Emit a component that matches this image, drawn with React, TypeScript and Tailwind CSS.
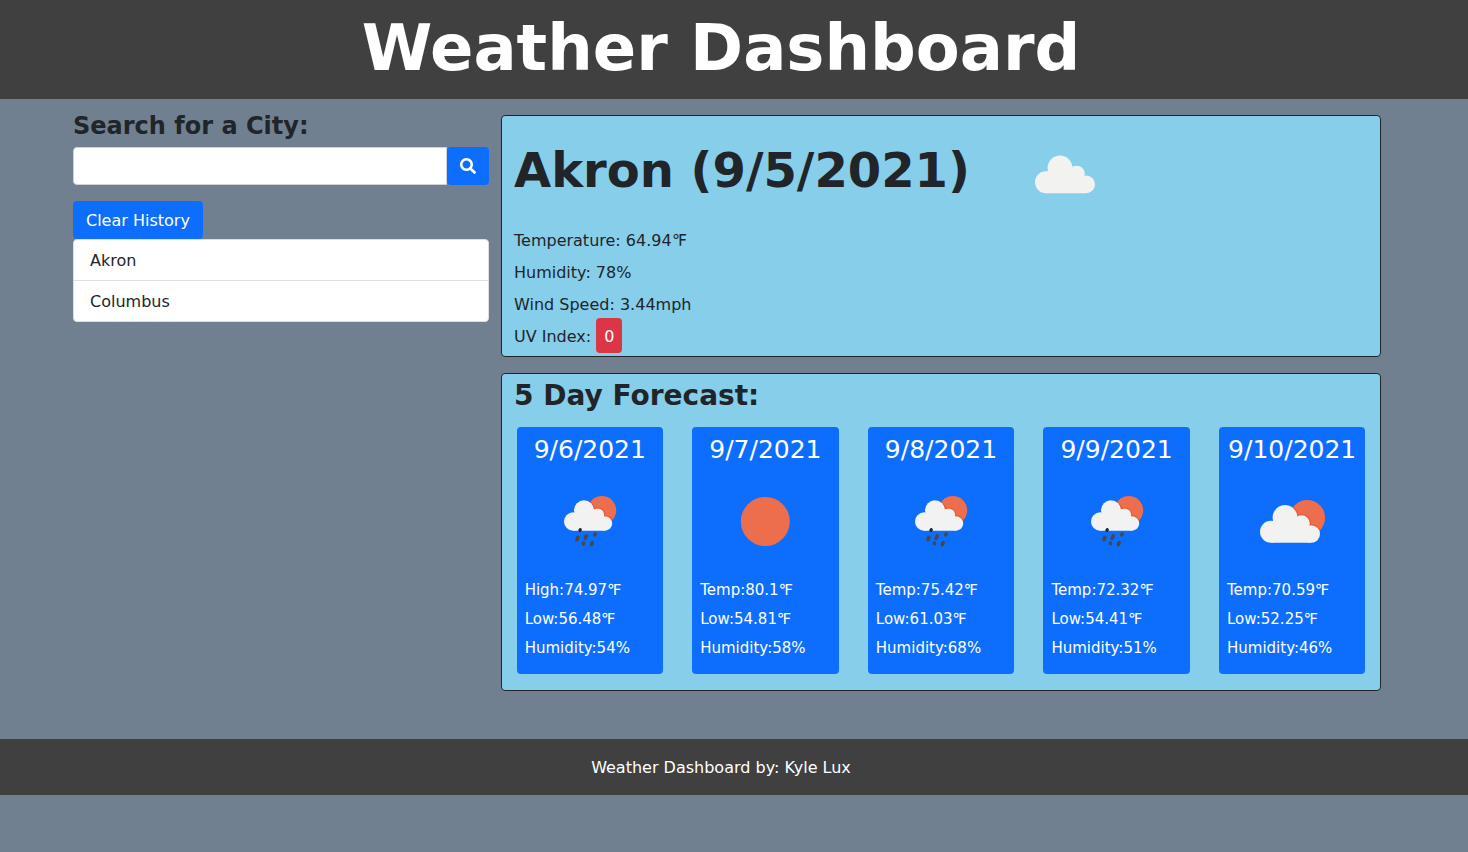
import { FormEvent, useState } from "react";
import { FaSearch } from "react-icons/fa";

type Sky = "cloud" | "rain" | "sun" | "partly";

const forecast: { date: string; sky: Sky; label: string; high: string; low: string; humidity: string }[] = [
  { date: "9/6/2021", sky: "rain", label: "High", high: "74.97", low: "56.48", humidity: "54" },
  { date: "9/7/2021", sky: "sun", label: "Temp", high: "80.1", low: "54.81", humidity: "58" },
  { date: "9/8/2021", sky: "rain", label: "Temp", high: "75.42", low: "61.03", humidity: "68" },
  { date: "9/9/2021", sky: "rain", label: "Temp", high: "72.32", low: "54.41", humidity: "51" },
  { date: "9/10/2021", sky: "partly", label: "Temp", high: "70.59", low: "52.25", humidity: "46" },
];

function LargeCloud() {
  return (
    <>
      <circle cx="29" cy="60.8" r="11" />
      <circle cx="43" cy="46.5" r="12.4" />
      <circle cx="59.6" cy="52.5" r="8.2" />
      <circle cx="69.2" cy="63" r="8.8" />
      <path d="M29 71.8V50H32L55 46L60 56L69 58V71.8Z" />
    </>
  );
}

function SmallCloud() {
  return (
    <>
      <circle cx="33.2" cy="50.5" r="9.2" />
      <circle cx="44" cy="39.2" r="10" />
      <circle cx="57.6" cy="44" r="6.6" />
      <circle cx="65" cy="52.5" r="7.2" />
      <path d="M33 59.7V42H36L54 38L58 47L65 48V59.7Z" />
    </>
  );
}

function SkyIcon({ sky }: { sky: Sky }) {
  return (
    <svg viewBox="0 0 100 100" className="size-[100px] shrink-0" aria-hidden="true">
      {sky === "sun" && <circle cx="50.3" cy="50.5" r="24.5" fill="#ec6e4c" />}
      {sky === "cloud" && (
        <g fill="#f2f2f0" transform="translate(3 1.4)">
          <LargeCloud />
        </g>
      )}
      {sky === "partly" && (
        <>
          <clipPath id="partly-sun">
            <circle cx="65.3" cy="46.8" r="17.8" />
          </clipPath>
          <circle cx="65.3" cy="46.8" r="17.8" fill="#ec6e4c" />
          <g clipPath="url(#partly-sun)" fill="#ea5430" stroke="#ea5430" strokeWidth="2">
            <LargeCloud />
          </g>
          <g fill="#f2f2f0">
            <LargeCloud />
          </g>
        </>
      )}
      {sky === "rain" && (
        <>
          <clipPath id="rain-sun">
            <circle cx="61.9" cy="39.3" r="14.3" />
          </clipPath>
          <circle cx="61.9" cy="39.3" r="14.3" fill="#ec6e4c" />
          <g clipPath="url(#rain-sun)" fill="#ea5430" stroke="#ea5430" strokeWidth="2">
            <SmallCloud />
          </g>
          <g fill="#f2f2f2">
            <SmallCloud />
          </g>
          <g stroke="#484848" strokeWidth="3.6" strokeLinecap="round">
            <path d="M40.3 58.6L39.9 59.4" stroke="#222222" strokeWidth="3.2" />
            <path d="M37.9 66.3L36.9 68.7" />
            <path d="M46.3 64.9L45.2 67.3" />
            <path d="M55.2 63L54.8 63.8" />
            <path d="M43.6 72L43.4 72.8" />
            <path d="M52.3 71.6L51.4 73.6" />
          </g>
        </>
      )}
    </svg>
  );
}

export default function App() {
  const [query, setQuery] = useState("");
  const [cities, setCities] = useState(["Akron", "Columbus"]);

  function search(event: FormEvent) {
    event.preventDefault();
    const city = query.trim();
    if (city && !cities.includes(city)) setCities([...cities, city]);
    setQuery("");
  }

  return (
    <div className="min-h-screen bg-[#708090] font-['Verdana','DejaVu_Sans',sans-serif] text-base text-[#212529]">
      <header className="bg-[#404040] pt-[10px] pr-[26px] pb-3 text-center text-white">
        <h1 className="text-[64px] leading-[77px] font-bold">Weather Dashboard</h1>
      </header>

      <main className="pt-4 pr-[26px] pb-12">
        <div className="mx-auto flex max-w-[1320px] flex-col lg:flex-row">
          <aside className="-mt-1 px-3 lg:w-1/3">
            <form onSubmit={search}>
              <label htmlFor="city" className="mb-1.5 block text-2xl leading-[30px] font-bold">
                Search for a City:
              </label>
              <div className="flex">
                <input
                  id="city"
                  type="text"
                  value={query}
                  onChange={(event) => setQuery(event.target.value)}
                  className="h-[38px] min-w-0 flex-1 rounded-l border border-[#ced4da] bg-white px-3 outline-none"
                />
                <button
                  type="submit"
                  aria-label="Search"
                  className="flex h-[38px] w-[42px] items-center justify-center rounded bg-[#0d6efd] text-white"
                >
                  <FaSearch />
                </button>
              </div>
            </form>
            <button
              type="button"
              onClick={() => setCities([])}
              className="mt-4 block rounded bg-[#0d6efd] px-[13px] pt-2 pb-1.5 text-white"
            >
              Clear History
            </button>
            <ul className="divide-y divide-[#dfdfdf] rounded border border-[#dfdfdf] bg-white">
              {cities.map((city) => (
                <li key={city} className="px-4 pt-[9px] pb-[7px]">
                  {city}
                </li>
              ))}
            </ul>
          </aside>

          <div className="flex flex-col gap-4 lg:w-2/3">
            <section className="rounded border border-[#212529] bg-[#87ceeb] px-3 pt-1 pb-[7px]">
              <div className="flex items-center gap-11">
                <h2 className="text-5xl leading-[58px] font-bold">Akron (9/5/2021)</h2>
                <SkyIcon sky="cloud" />
              </div>
              <div className="mt-[9px] flex flex-col gap-2">
                <p>Temperature: 64.94℉</p>
                <p>Humidity: 78%</p>
                <p>Wind Speed: 3.44mph</p>
                <p>
                  UV Index: <span className="rounded bg-[#dc3545] px-2 pt-[9px] pb-[7px] text-white">0</span>
                </p>
              </div>
            </section>

            <section className="rounded border border-[#212529] bg-[#87ceeb] pt-[5px] pb-4">
              <h2 className="mb-[14px] px-3 text-[28px] leading-[34px] font-bold">5 Day Forecast:</h2>
              <div className="flex justify-around">
                {forecast.map((day) => (
                  <article key={day.date} className="w-1/6 rounded bg-[#0d6efd] px-2 pt-2 pb-[11px] text-white">
                    <h3 className="flex justify-center text-[25px] leading-[30px]">{day.date}</h3>
                    <div className="mt-1.5 mb-[5px] flex justify-center">
                      <SkyIcon sky={day.sky} />
                    </div>
                    <div className="text-[15px]">
                      <p className="py-1 leading-[21px]">{day.label}:{day.high}℉</p>
                      <p className="py-1 leading-[21px]">Low:{day.low}℉</p>
                      <p className="py-1 leading-[21px]">Humidity:{day.humidity}%</p>
                    </div>
                  </article>
                ))}
              </div>
            </section>
          </div>
        </div>
      </main>

      <footer className="bg-[#404040] pt-[17px] pr-[26px] pb-[15px] text-center text-white">
        <p>Weather Dashboard by: Kyle Lux</p>
      </footer>
    </div>
  );
}
